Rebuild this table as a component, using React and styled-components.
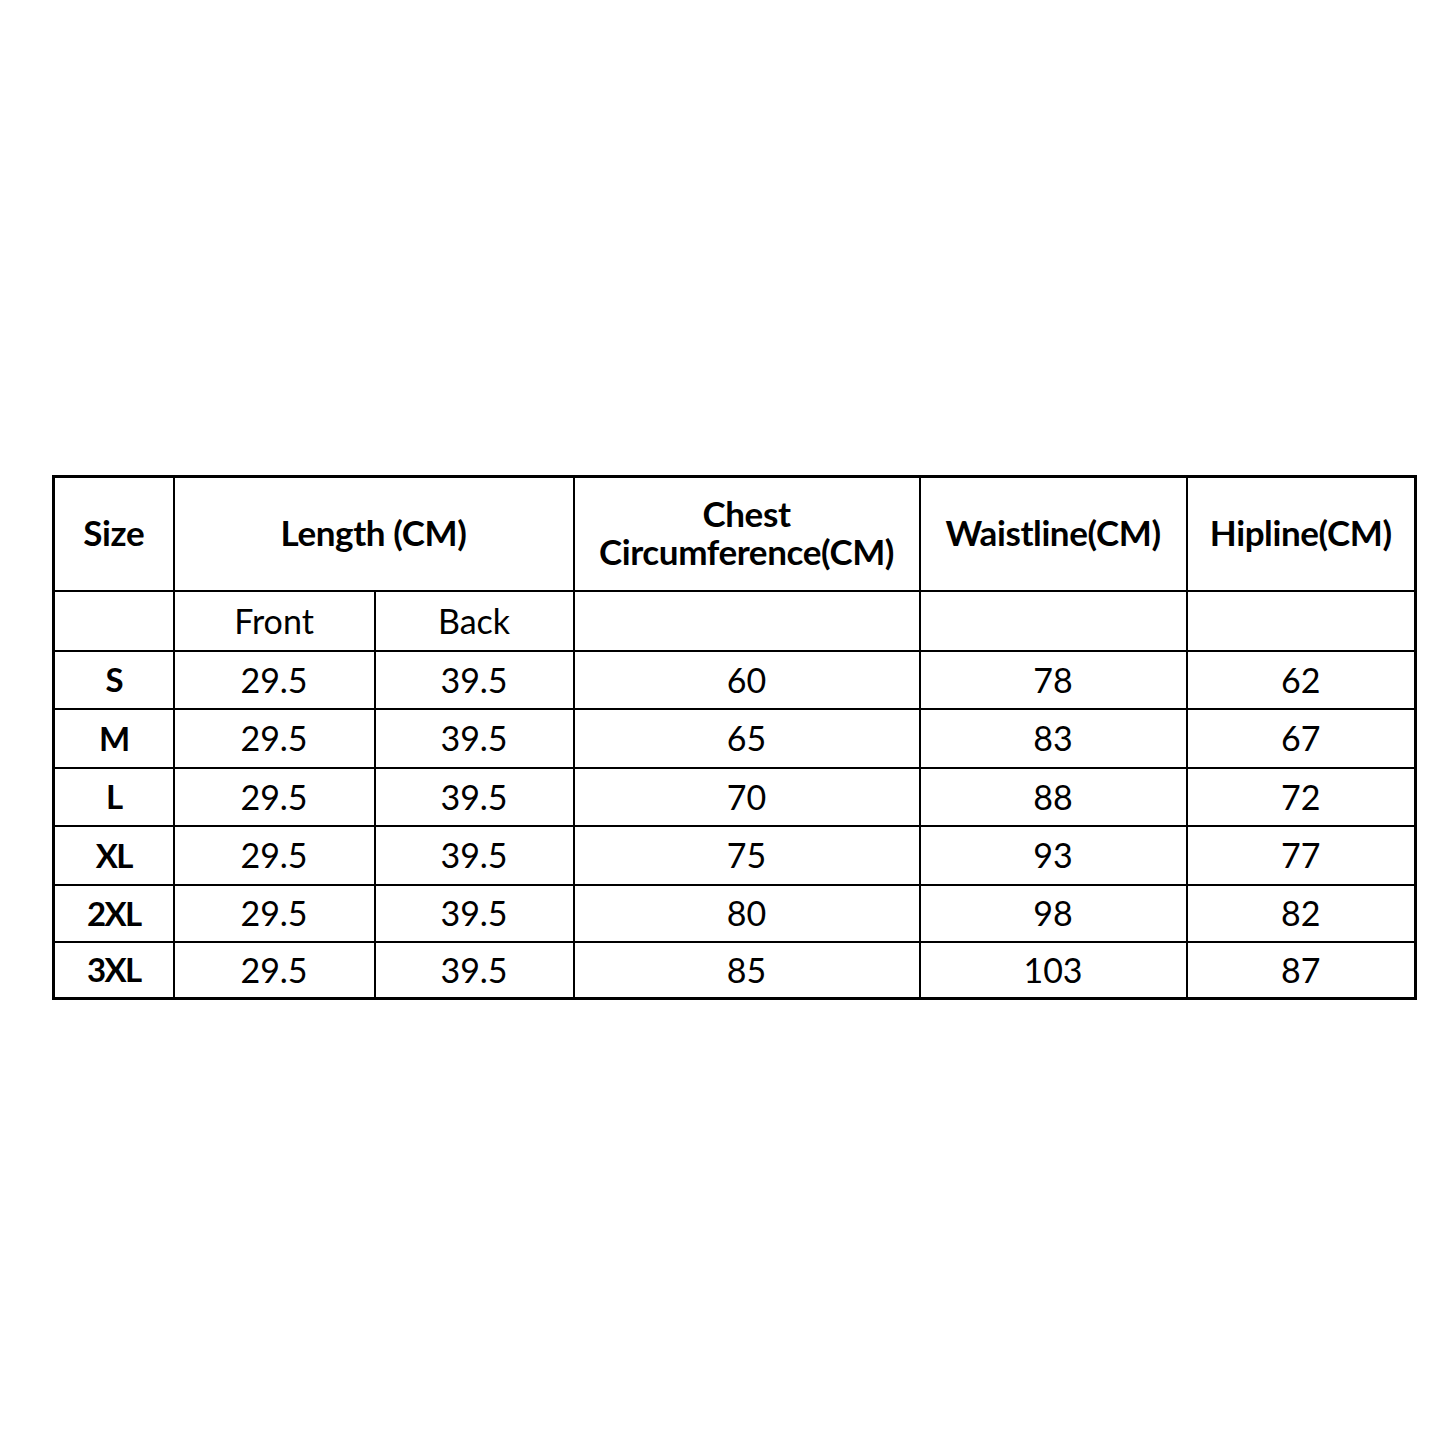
import styled, { createGlobalStyle } from "styled-components";

const GlobalStyle = createGlobalStyle`
  html, body {
    margin: 0;
    padding: 0;
    background: #ffffff;
  }
  body {
    font-family: "Lato", "Open Sans", "Liberation Sans", sans-serif;
    color: #000000;
  }
`;

const columns = [120, 201, 199, 346, 267, 229];

const rows = [
  { size: "S", front: "29.5", back: "39.5", chest: "60", waist: "78", hip: "62" },
  { size: "M", front: "29.5", back: "39.5", chest: "65", waist: "83", hip: "67" },
  { size: "L", front: "29.5", back: "39.5", chest: "70", waist: "88", hip: "72" },
  { size: "XL", front: "29.5", back: "39.5", chest: "75", waist: "93", hip: "77" },
  { size: "2XL", front: "29.5", back: "39.5", chest: "80", waist: "98", hip: "82" },
  { size: "3XL", front: "29.5", back: "39.5", chest: "85", waist: "103", hip: "87" },
];

const rowHeights = [58, 59, 58, 59, 57, 57];

export default function App() {
  return (
    <Page>
      <GlobalStyle />
      <SizeTable>
        <colgroup>
          {columns.map((w, i) => (
            <col key={i} style={{ width: w }} />
          ))}
        </colgroup>
        <tbody>
          <HeadRow>
            <HeadCell>Size</HeadCell>
            <HeadCell colSpan={2}>Length (CM)</HeadCell>
            <HeadCell>
              Chest
              <br />
              Circumference(CM)
            </HeadCell>
            <HeadCell>Waistline(CM)</HeadCell>
            <HeadCell>Hipline(CM)</HeadCell>
          </HeadRow>
          <SubRow>
            <Cell />
            <SubCell>Front</SubCell>
            <SubCell>Back</SubCell>
            <Cell />
            <Cell />
            <Cell />
          </SubRow>
          {rows.map((r, i) => (
            <DataRow key={r.size} style={{ height: rowHeights[i] }}>
              <SizeCell>{r.size}</SizeCell>
              <Cell>{r.front}</Cell>
              <Cell>{r.back}</Cell>
              <Cell>{r.chest}</Cell>
              <Cell>{r.waist}</Cell>
              <Cell>{r.hip}</Cell>
            </DataRow>
          ))}
        </tbody>
      </SizeTable>
    </Page>
  );
}

const Page = styled.div`
  width: 1445px;
  height: 1445px;
  box-sizing: border-box;
  padding: 475px 0 0 52px;
  background: #ffffff;
`;

const SizeTable = styled.table`
  border-collapse: collapse;
  table-layout: fixed;
  width: 1364px;
  border: 3px solid #000;
`;

const HeadRow = styled.tr`
  height: 114px;
`;

const SubRow = styled.tr`
  height: 60px;
`;

const DataRow = styled.tr``;

const Cell = styled.td`
  border: 2.5px solid #000;
  padding: 0;
  text-align: center;
  vertical-align: middle;
  font-size: 34px;
  font-weight: 400;
  line-height: 1;
`;

const HeadCell = styled(Cell)`
  font-weight: 700;
  font-size: 35px;
  line-height: 38px;
  letter-spacing: -0.4px;
  padding-bottom: 4px;
`;

const SubCell = styled(Cell)`
  font-size: 34px;
  padding-top: 1px;
`;

const SizeCell = styled(Cell)`
  font-weight: 700;
  font-size: 33px;
  letter-spacing: -1.6px;
`;
